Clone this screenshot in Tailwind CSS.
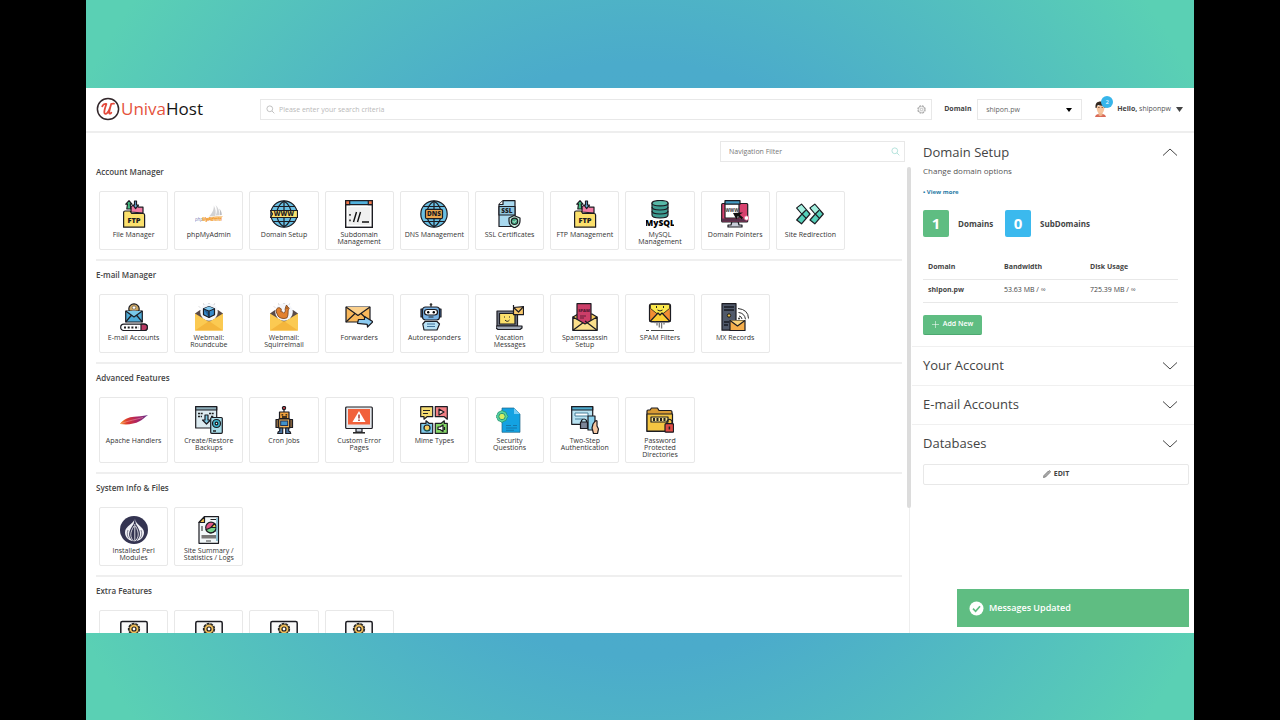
<!DOCTYPE html>
<html lang="en">
<head>
<meta charset="utf-8">
<title>UnivaHost</title>
<script src="https://cdn.jsdelivr.net/npm/@tailwindcss/browser@4"></script>
</head>
<body class="h-screen overflow-hidden bg-black px-[86px] font-['Open_Sans',sans-serif] text-[#444]">
<div class="flex h-full flex-col bg-[radial-gradient(circle_at_center,#4aaacd_0%,#4babcb_45%,#5ad0b4_94%)] pt-[88px] pb-[87px]">
<div class="relative flex min-h-0 flex-1 flex-col overflow-hidden bg-white">

  <header class="flex h-[45px] shrink-0 items-center border-b-2 border-[#eee] pr-[11px] pb-px pl-[10px]">
    <a href="#" class="flex w-[164px] shrink-0 items-center text-[17px] leading-6 text-[#151515]" aria-label="UnivaHost">
      <svg class="size-6" viewBox="0 0 24 24" fill="none"><circle cx="12" cy="12" r="10.600" stroke="#33272b" stroke-width="1.500"/><path d="M6.200 9.300C7 7.500 8.300 6.700 9.800 6.900M10.400 7C9.500 9.500 8.300 13 8.300 15.200c0 2 1.600 2.200 3.200.4 1.600-1.900 2.700-4.900 3.700-8.600M15.200 7c-1 3.600-2.200 7.200-1.900 9 .2 1.100 1.200.8 2-.3M15.200 7c1-.4 2-.5 2.800-.3" stroke="#e3493b" stroke-width="1.800" stroke-linecap="round"/></svg>
      <span class="ml-px"><span class="text-[#e5533d]">Univa</span>Host</span>
    </a>
    <label class="flex h-[21px] flex-1 items-center border border-[#e8e8e8] px-[5px]">
      <svg class="size-[9px]" viewBox="0 0 10 10" fill="none" stroke="#bbb"><circle cx="4.200" cy="4.200" r="3.200"/><path d="M6.600 6.600 9.300 9.300"/></svg>
      <input type="text" aria-label="Search" placeholder="Please enter your search criteria" class="ml-1 h-4 min-w-0 flex-1 text-[7px] outline-none placeholder:text-[#b9b9b9]">
      <svg class="size-[9px]" viewBox="0 0 10 10" fill="none" stroke="#aaa"><circle cx="5" cy="5" r="4" stroke-dasharray="2.200 .94" stroke-width="1.400"/><circle cx="5" cy="5" r="3.300" stroke-width=".6"/><circle cx="5" cy="5" r="1.400" stroke-width=".8"/></svg>
    </label>
    <label for="dom" class="ml-3 w-[33px] text-[7px] font-bold">Domain</label>
    <div class="relative h-[21px] w-[105px] border border-[#e8e8e8]">
      <select id="dom" class="block size-full appearance-none pl-2 text-[7px] leading-[19px] text-[#666]"><option>shipon.pw</option></select>
      <svg class="pointer-events-none absolute top-2 right-[9px] h-1 w-[6px]" viewBox="0 0 6 4"><path d="M0 0h6L3 4z" fill="#000"/></svg>
    </div>
    <button class="relative ml-3 flex items-center text-[7px]">
      <svg class="h-4 w-[13px]" viewBox="0 0 13 16"><path d="M1 16c.4-2.500 2.500-3 5.500-3s5 .5 5.500 3z" fill="#d96a57"/><path d="M4.500 11h4v3.200l-2 1-2-1z" fill="#efb58d"/><path d="M2.500 5c0 5 1.500 7.500 4 7.500S10.500 10 10.500 5z" fill="#f6c39c"/><path d="M1.600 7C1 2.500 3 .5 6.500.5S12 2.500 11.400 7l-1-.2V4.600c-2.500.5-5-.2-6.300-.7-.9.6-1.400 1.600-1.500 3z" fill="#33271f"/><path d="M4 6.500h1.700M7.500 6.500h1.600" stroke="#4b3023" stroke-width=".6"/></svg>
      <span class="absolute top-[-5px] left-[7px] size-3 rounded-full bg-[#37b5ea] text-center text-[6px] leading-3 text-white">2</span>
      <span class="ml-[10px]"><b>Hello,</b> <span class="text-[#555]">shiponpw</span></span>
      <svg class="ml-[5px] h-[5px] w-[7px]" viewBox="0 0 7 5"><path d="M0 0h7L3.500 5z" fill="#444"/></svg>
    </button>
  </header>

  <div class="flex min-h-0 flex-1">
    <main class="min-w-0 flex-1 overflow-hidden pt-2 pl-[10px]">
      <label class="mr-[2px] ml-auto flex h-[21px] w-[185px] items-center border border-[#e8e8e8] px-1">
        <input type="text" aria-label="Navigation filter" placeholder="Navigation Filter" class="ml-1 h-4 min-w-0 flex-1 text-[7px] outline-none placeholder:text-[#777]">
        <svg class="size-[9px]" viewBox="0 0 10 10" fill="none" stroke="#aee0d8"><circle cx="4.200" cy="4.200" r="3.200"/><path d="M6.600 6.600 9.300 9.300"/></svg>
      </label>
      <div id="sections" class="-mt-1"></div>
    </main>
    <div class="flex w-[5px] shrink-0 justify-center pt-[34px]">
      <div class="relative h-full w-px bg-[#eee]"><div class="absolute top-0 left-[-2px] h-[341px] w-1 rounded-sm bg-[#dcdcdc]"></div></div>
    </div>

    <aside class="w-[282px] shrink-0 pt-[9px]">
      <section class="border-b border-[#f0f0f0] pr-4 pb-[11px] pl-[11px]">
        <button class="flex w-full items-center justify-between text-[13px] leading-5 text-[#444]">Domain Setup
          <svg class="h-2 w-4" viewBox="0 0 16 8" fill="none" stroke="#444"><path d="M1 7.500 8 1l7 6.500"/></svg></button>
        <p class="mt-1 text-[8px] leading-[10px] text-[#555]">Change domain options</p>
        <a href="#" class="mt-[11px] block text-[6px] leading-[10px] font-bold text-[#287aa6]">• View more</a>
        <div class="mt-[13px] flex items-center text-[8px] font-bold">
          <span class="h-[27px] w-[26px] rounded-xs bg-[#5fbd82] text-center text-[15px] leading-[27px] text-white">1</span>
          <span class="ml-[9px] w-[47px]">Domains</span>
          <span class="h-[27px] w-[26px] rounded-xs bg-[#3bb9ee] text-center text-[15px] leading-[27px] text-white">0</span>
          <span class="ml-[9px]">SubDomains</span>
        </div>
        <table class="mt-[18px] w-full table-fixed text-left text-[7px]">
          <thead><tr class="h-6 border-b border-[#e8e8e8]"><th class="w-[76px] pl-[5px]">Domain</th><th class="w-[86px] pl-[5px]">Bandwidth</th><th class="pl-[5px]">Disk Usage</th></tr></thead>
          <tbody><tr class="h-[23px] border-b border-[#e8e8e8]"><th class="pl-[5px]">shipon.pw</th><td class="pl-[5px]">53.63 MB / ∞</td><td class="pl-[5px]">725.39 MB / ∞</td></tr></tbody>
        </table>
        <button class="mt-3 flex h-5 w-[59px] items-center justify-center rounded-xs border-b border-[#4da870] bg-[#5fbd82] text-[7px] font-semibold text-white"><svg class="mr-1 size-[7px]" viewBox="0 0 8 8" stroke="#fff" stroke-width=".6"><path d="M4 0v8M0 4h8"/></svg>Add New</button>
      </section>
      <button class="flex h-[39px] w-full items-center justify-between border-b border-[#f0f0f0] pr-4 pl-[11px] text-[13px]">Your Account<svg class="h-2 w-4" viewBox="0 0 16 8" fill="none" stroke="#444"><path d="M1 .5 8 7l7-6.500"/></svg></button>
      <button class="flex h-[39px] w-full items-center justify-between border-b border-[#f0f0f0] pr-4 pl-[11px] text-[13px]">E-mail Accounts<svg class="h-2 w-4" viewBox="0 0 16 8" fill="none" stroke="#444"><path d="M1 .5 8 7l7-6.500"/></svg></button>
      <button class="flex h-[39px] w-full items-center justify-between pr-4 pl-[11px] text-[13px]">Databases<svg class="h-2 w-4" viewBox="0 0 16 8" fill="none" stroke="#444"><path d="M1 .5 8 7l7-6.500"/></svg></button>
      <div class="pr-[5px] pl-[11px]"><button class="flex h-[21px] w-full items-center justify-center gap-[3px] rounded-xs border border-[#e8e8e8] text-[7px] font-bold"><svg class="size-2" viewBox="0 0 10 10"><path d="M.5 9.500 1.200 6.800 6.800 1.200 8.800 3.200 3.200 8.800z" fill="#aaa" stroke="#555" stroke-width=".7"/><path d="M7.300.7l.6-.5 1.900 1.900-.5.600z" fill="#444"/></svg>EDIT</button></div>
    </aside>
  </div>

  <div role="status" class="absolute right-[5px] bottom-[6px] flex h-[38px] w-[232px] items-center gap-[5px] bg-[#5fbd82] pl-3 text-[9px] font-semibold text-white">
    <svg class="size-[15px]" viewBox="0 0 15 15"><circle cx="7.500" cy="7.500" r="7" fill="#fff"/><path d="M4 7.700l2.600 2.600L11 5.300" fill="none" stroke="#5fbd82" stroke-width="1.700"/></svg>
    Messages Updated
  </div>
</div>
</div>

<script>
const K = 'stroke="#1c1c22" stroke-width="1.200" stroke-linejoin="round"';
const envelope = `<path d="M0 10.500 5 7h18l5 3.500V27H0z" fill="#5a4b48"/><circle cx="14" cy="9" r="8.800" fill="#f4f6fa"/><path d="M5 4.500l-1-1M9 1.800 8.500.5M14 1V0M19 1.800l.6-1.300" stroke="#aaa" stroke-width=".7"/>`;
const flap = `<path d="M0 10.500 14 19l14-8.500V27.500H0z" fill="#fbca52"/><path d="M0 27.500 14 18l14 9.500z" fill="#f4b63c"/>`;
const globe = `<circle cx="14" cy="14" r="13.200" fill="#69bfe3" ${K}/><path d="M14 1v26M3 6.500h22M3 21.500h22M14 1C4.500 7 4.500 21 14 27M14 1c9.500 6 9.500 20 0 26" fill="none" ${K}/>`;
const icons = {
ftp:`<path d="M11 12V6.500l2-1h4l1.500 1.700H23V13z" fill="#f27ba4" ${K}/><path d="M9 .7 5.800 4.200h1.700L6.800 9h4l-.6-4.800H12z" fill="#43bd81" ${K}/><path d="M14.500 1h2v4h2L15.600 8.600 13 5h1.500z" fill="#69a9d9" ${K}/><path d="M3.600 27.200V12.500q0-1.500 1.500-1.500h5l1.600 2.500H23q1.600 0 1.600 1.500v12.200z" fill="#fbe06c" ${K}/><text x="14" y="23" text-anchor="middle" font-size="7.500" font-weight="800" fill="#1c1c22">FTP</text>`,
pma:`<path d="M14 16.500C18 12 19 9 18.800 5.500c2 3.500 2.300 7 1.500 10.500zM20.800 15.500c1.700-4 1.300-7.500-.3-10.500 3 2.700 4.200 6.500 3.600 10.300z" fill="#d2d2d4"/><path d="M24.500 15.200c.6-2.600.5-4.600-.2-6.600 1.700 1.800 2.500 4 2.500 6.300z" fill="#bdbdc2"/><path d="M10 18.500c6-2 12-2.500 18-2.300-1.500 1.300-2 2.100-2.300 3.200-5-.5-10 .2-15 1.600z" fill="#f7c078"/><text x="0" y="20.500" font-size="4.500" font-style="italic" fill="#8085b8">php</text><text x="7" y="20.500" font-size="4.500" font-style="italic" font-weight="700" fill="#f19a2c">MyAdmin</text>`,
www:`${globe}<path d="M.5 10.500h27v7H.5l2-3.500z" fill="#fbe06c" ${K}/><text x="14" y="16.300" text-anchor="middle" font-size="6.500" font-weight="800" fill="#1c1c22">WWW</text>`,
sub:`<rect x=".7" y=".7" width="26.600" height="26.600" fill="#fff" stroke="#1c1c22" stroke-width="1.400"/><path d="M.7.7h26.600v4H.7z" fill="#52b1dc" ${K}/><path d="M.7.7h4v4h-4z" fill="#f2784b" ${K}/><path d="M23.300.7h4v4h-4z" fill="#f2784b" ${K}/><rect x="3" y="7" width="22" height="18" fill="#f0f0f0"/><path d="M11.500 12 8.500 22M15.500 12l-3 10M17 22h7M5 14v1.700M5 19.500v1.700" stroke="#111" stroke-width="1.400"/>`,
dns:`${globe}<rect x="5.500" y="9.300" width="17" height="9.400" rx="1.500" fill="#e9a54d" ${K}/><text x="14" y="16.400" text-anchor="middle" font-size="6.500" font-weight="800" fill="#1c1c22">DNS</text>`,
ssl:`<path d="M3 26.500V4.500L7 .7h12v25.800z" fill="#a9d9ef" ${K}/><path d="M3 4.500h4V.7" fill="#fff" ${K}/><rect x="3" y="6.500" width="16" height="8.500" fill="#8fc6e0" ${K}/><text x="11" y="13" text-anchor="middle" font-size="6.500" font-weight="800" fill="#1c1c22">SSL</text><path d="M18 15.500 24 18v3c0 3-2 5.500-5.500 6.700C15 26.500 13 24 13 21v-3z" fill="#c3e9d8" ${K}/><circle cx="18.500" cy="21.300" r="3.200" fill="#43a981" ${K}/><path d="m17 21.300 1.200 1.200 2-2.200" stroke="#fff" stroke-width=".8" fill="none"/>`,
mysql:`<path d="M6 3v12c0 4 16 4 16 0V3z" fill="#3f9d92" ${K}/><ellipse cx="14" cy="3.200" rx="8" ry="2.700" fill="#58b8a7" ${K}/><path d="M6 7c0 4 16 4 16 0M6 11c0 4 16 4 16 0" fill="none" ${K}/><text x="14" y="26" text-anchor="middle" font-size="8.500" font-weight="800" fill="#000">MySQL</text>`,
ptr:`<path d="M11 21h6l1 4h3v2H7v-2h3z" fill="#c8ccd8" ${K}/><rect x=".7" y="3.500" width="26" height="18.500" rx="1" fill="#d7416e" ${K}/><path d="M1 18.500h25.500v3H1z" fill="#59304c"/><rect x="4" y="3" width="14" height="15" fill="#fff" ${K}/><path d="M4 .7h15v3.500H4z" fill="#449cc5" ${K}/><text x="11" y="12" text-anchor="middle" font-size="4.500" font-weight="700" fill="#333">WWW</text><path d="m12 13 10-.5-3.300 2.300 3.500 3-1.700 1.400-3.500-3.500-1.600 3.800z" fill="#111"/><circle cx="25.500" cy="18" r="2.200" fill="#fff" stroke="#e58" stroke-width=".7"/>`,
redir:`<path d="m.7 8 4.800-3.800 8.500 9.800-8.500 9.800L.7 20l5.300-6z" fill="#55d0ba" ${K}/><path d="m14 8 4.800-3.800 8.500 9.800-8.500 9.800L14 20l5.300-6z" fill="#55d0ba" ${K}/><path d="m1.500 8 4-3 4.300 5-4 3.200zm13.300 0 4-3 4.300 5-4 3.200z" fill="#a5efdf"/><path d="m6 14 4.200 4.300M6 14l3.800-3.700M19.300 14l4.200 4.300M19.300 14l3.800-3.700" ${K}/>`,
mail:`<circle cx="14" cy="6" r="5.200" fill="#cfa964" ${K}/><circle cx="14" cy="4.600" r="1.700" fill="#fff" stroke="#333" stroke-width=".5"/><path d="M10.800 9c.8-3 5.600-3 6.400 0z" fill="#eee"/><path d="M5.700 8h16.600v11H5.700z" fill="#4eabd7" ${K}/><path d="m5.700 8 8.300 6 8.300-6M5.700 19l5.500-6.500M22.300 19l-5.500-6.500" fill="#78c8e9" ${K}/><rect x=".7" y="21.200" width="26.600" height="6.300" rx="3.100" fill="#fff" ${K}/><path d="M21 21.200h3.200a3.100 3.100 0 0 1 0 6.300H21z" fill="#b93a63" ${K}/><path d="M4 24.400h15" stroke="#222" stroke-width="2" stroke-dasharray="2 1.700"/>`,
cube:`${envelope}<path d="m14 3.500 5.500 2.200v6L14 14.500 8.500 11.700v-6z" fill="#358acb" ${K}/><path d="m8.500 5.700 5.500 2.200v6.600M14 7.900l5.500-2.200" fill="#256097" ${K}/><path d="m9 5.400 5-1.800 5 1.800-5 2z" fill="#82c8ef"/>${flap}`,
squirrel:`${envelope}<path d="M14 15.500c-3.500 0-6.300-1.500-6.800-4.500C5.500 8.500 6 5 8.600 4.700c2.600-.2 3.400 2.200 2.200 3.800 1.600.2 2.500.9 3 1.700 1.500-1.200 1.800-2.500 1.300-4L15.700 4l.8-2 1.300 2c1.600.7 1.900 2 .4 2.900-.2 2.900.2 5.800-1.400 8.100z" fill="#e2812e" stroke="#713c19" stroke-width=".8"/><circle cx="17" cy="5" r=".5"/>${flap}`,
fwd:`<path d="M1 4h24v15H1z" fill="#f9b85b" ${K}/><path d="m1 4 12 8.500L25 4M1 19l9-8.500M25 19l-9-8.500" fill="#fbd08c" ${K}/><path d="m12.500 20.300 1-3.800h6v-3L28 18.700 22.500 24l-.3-2.700z" fill="#8bcaf0" ${K}/>`,
auto:`<path d="M11 4V1.500" stroke="#222"/><circle cx="11" cy="1.500" r="1.300" fill="#333"/><path d="M1 6h20v8H1z" fill="#4a7fc0" ${K}/><rect x="2.500" y="4" width="17" height="13" rx="3" fill="#78b3e5" ${K}/><rect x="4.500" y="6.500" width="13" height="5.500" rx="2.700" fill="#fff" ${K}/><circle cx="8.200" cy="9.200" r="1.200"/><circle cx="13.800" cy="9.200" r="1.200"/><path d="M8.500 14h5" stroke="#222"/><path d="M5 18.500h12l2.500 2.500L17 27H4l-1.200-6z" fill="#b9e2f5" ${K}/><path d="M7 21h8M7 23.500h8" stroke="#3e729b"/>`,
vac:`<rect x="1" y="8" width="20.500" height="15" fill="#737987" ${K}/><rect x="3.500" y="10.500" width="15.500" height="10.500" fill="#fbe06c" ${K}/><path d="M8.500 13.500v1M13.500 13.500v1M9 17c1.500 1.800 3 1.800 4.500 0" fill="none" stroke="#222"/><path d="M0 23h26v2l-2 1.500H2L0 25z" fill="#9ea6b4" ${K}/><path d="m17.500 4.500 10-.8v8h-10z" fill="#f9c96d" ${K}/><path d="m17.500 4.500 5 4.500 5-5.300M17.500 2v2" fill="none" ${K}/>`,
spamset:`<path d="m2 14 5-3h14l5 3v13.300H2z" fill="#f5c95f" ${K}/><path d="M6 .7h14v18L14 22l-8-5z" fill="#cc3e69" ${K}/><path d="M9 13h6M9 15h4" stroke="#641d38"/><text x="13" y="9" text-anchor="middle" font-size="4" font-weight="800" fill="#4f1730">SPAM</text><path d="M2 14v13.300h24V14l-12 7z" fill="#fbe08b" ${K}/><path d="m2 27.300 10-7.500M26 27.300 14 18" ${K}/>`,
filter:`<rect x="3.500" y=".8" width="21" height="18" rx="2" fill="#f28e33" ${K}/><path d="M4.500 1.500h19v4L14 13 4.500 5.500z" fill="#fce84a" stroke="#222" stroke-width=".8"/><path d="m4 18.500 8-8.500 2 2 2-2 8 8.500z" fill="#fccf34" ${K}/><path d="M10.500 3v2M17.500 3v2M11.500 7q2.500 2 5 0" fill="none" stroke="#222"/><path d="M8.500 19.500h1M11 19.500v3M13.300 19.500v5M15.600 19.500v6M18 19.500v2" stroke="#777" stroke-width="1.300"/><path d="M0 27.500h3M5 27.500h23" stroke="#444"/>`,
mx:`<rect x="1" y=".7" width="14" height="26.500" fill="#50596a" ${K}/><path d="M3 4h10M3 7h10" stroke="#171a22" stroke-width="1.300"/><circle cx="8" cy="12.500" r="1.700" fill="#eec34e" stroke="#151515"/><path d="M3 19h5M3 22h4" stroke="#171a22" stroke-width="1.300"/><path d="M18 13q2.500.2 3 3M17.500 9.500q6 .5 7 6.800M17 5.500q10.300 1 10.500 10" fill="none" stroke="#333"/><circle cx="18" cy="15.500" r="1" fill="#333"/><path d="M9 17.500h15v10H9z" fill="#f5ae4b" ${K}/><path d="m9 17.500 7.500 5.500 7.500-5.500" fill="#fbd47a" ${K}/>`,
apache:`<defs><linearGradient id="feather"><stop stop-color="#f69923"/><stop offset=".25" stop-color="#dc3a2c"/><stop offset=".6" stop-color="#ae2363"/><stop offset="1" stop-color="#63358c"/></linearGradient></defs><path d="M0 18c3-4.500 9-7 14-7.200 4-.2 8-.5 14-1.800-3.500 2.500-5.300 4.800-8.500 6.300C14 18.300 7 19 0 18z" fill="url(#feather)"/><path d="M1 17.500c8-3 15-4 22-6" fill="none" stroke="#f9a8b2" stroke-width=".5"/>`,
backup:`<rect x=".7" y=".7" width="21" height="21.300" fill="#dcebf1" ${K}/><path d="M.7.7h21V4h-21z" fill="#8cadb9" ${K}/><path d="M3 7.500h5M14 7.500h5M3 10.500h4M16 10.500h3" stroke="#222" stroke-dasharray="2 .7" stroke-width="1.300"/><path d="M10 9h3v5h2.500l-4 4-4-4H10z" fill="#7bc9e5" ${K}/><rect x="15.700" y="11.500" width="11.600" height="15.800" rx="1" fill="#a7dce8" ${K}/><circle cx="21.500" cy="17.500" r="4" fill="#3db4cb" ${K}/><circle cx="21.500" cy="17.500" r="1.300" fill="#fff" ${K}/><path d="M18 25h3" stroke="#222" stroke-width="1.500"/>`,
cron:`<circle cx="14" cy="2" r="1.600" fill="#dc4a50" ${K}/><path d="M14 3.500V6" ${K}/><rect x="9.500" y="6" width="9.500" height="6.700" fill="#f2a33d" ${K}/><path d="M11.500 8.800h1.700M15.500 8.800h1.700M12 11h5" stroke="#111" stroke-width="1.300"/><path d="M6 13.500h3v8H6zm13.500 0h3v8h-3z" fill="#8b6840" ${K}/><rect x="8.700" y="13" width="11" height="9" fill="#f4b556" ${K}/><rect x="10.700" y="15" width="7" height="4.500" fill="#3f92cc" stroke="#235"/><path d="M9.700 22h3v5.500h-5q0-2 2-2.500zm6 0h3v3q2 .5 2 2.500h-5z" fill="#4d78a5" ${K}/>`,
error:`<path d="M11 22h6v4h-6z" fill="#cbd2dd" ${K}/><path d="M8 26.800h12" stroke="#222" stroke-width="1.500"/><rect x=".7" y="1" width="26.600" height="21.500" rx="1" fill="#e4e8ec" ${K}/><rect x="3" y="3" width="22" height="15.500" fill="#f1613b"/><path d="M14 5 20.500 16h-13z" fill="#fff"/><path d="M14 8.500v4M14 13.500v1.500" stroke="#9b2d25" stroke-width="1.400"/>`,
mime:`<path d="M.7.7h12v10H7l-3 2.500v-2.500H.7z" fill="#f5dc73" ${K}/><path d="M3 4.500h7M3 7.500h5" stroke="#222"/><path d="M15.300.7h12v12.500l-3-2.500h-9z" fill="#f27f83" ${K}/><path d="m19 3 5 3-5 3z" fill="#ffd4d2" ${K}/><path d="M.7 27.300h12v-10H9l-3-2.500v2.500H.7z" fill="#7cc9e8" ${K}/><circle cx="7" cy="22" r="3" fill="#f5cf62" ${K}/><path d="M4 23c2 2 4 2 6 0" fill="none" stroke="#176"/><path d="M15.300 27.300h12v-10h-3v-2.500l-3 2.500h-6z" fill="#86d868" ${K}/><path d="M18 21h2l3-2v6.500l-3-2h-2zm6.500 0v3" fill="#fff" ${K}/>`,
question:`<path d="M6 2h12l6 6v18.300H6z" fill="#13a2e2" stroke="#1f6587" stroke-width=".7"/><path d="m18 2 6 6h-6z" fill="#75cdf5"/><path d="M10 19.500h5M17 19.500h4M10 22h11M10 24.300h8" stroke="#176694" stroke-width=".7"/><path d="m6 4.500 2 1 2 .7.700 2L12 10.500l-1.300 2-.7 2-2 .7-2 1.300-2-1.300-2-.7-.7-2L0 10.500l1.300-2L2 6.500l2-1z" fill="#56d4a2" stroke="#249372" stroke-width=".8"/><circle cx="6" cy="10.500" r="3.200" fill="#d4ee61" stroke="#26967c"/>`,
twostep:`<rect x=".7" y=".7" width="21" height="17.600" fill="#b9e3f2" ${K}/><path d="M.7.7h21V4h-21z" fill="#4eaacd" ${K}/><path d="M4 7h13v3H4zM4 13h8" fill="#fff" stroke="#487e98"/><path d="M17 10h7v14h-7z" fill="#8bd1ed" ${K}/><path d="M22 18c2-3 3-4 4-3v5l1.500 3-1 4.500h-4L21 22z" fill="#f5c6a0" ${K}/><path d="M10.500 16v-1.500q2.500-3 5 0V16" fill="none" ${K}/><rect x="9.500" y="16" width="7" height="6.500" fill="#7c8698" ${K}/>`,
folder:`<path d="M1 25.500V5q0-1 1-1h2l1.500-2h6L13 4.500h11.500q1.500 0 1.500 1.500v19.500z" fill="#d89b35" ${K}/><path d="M1 8h25.500v17H1z" fill="#f4c542" ${K}/><rect x="5" y="11" width="17" height="5" fill="#f9e28a" ${K}/><path d="M7 13.500h13" stroke="#222" stroke-width="3" stroke-dasharray="2 1.500"/><path d="M21 18v-3q2.500-3.500 5 0v3" fill="none" ${K}/><rect x="19" y="17.700" width="8.500" height="8.500" rx="1" fill="#e04b45" ${K}/><path d="M23.400 20.500v3" stroke="#222" stroke-width="1.500"/>`,
perl:`<circle cx="14" cy="14" r="14" fill="#343451"/><path d="M14.500 2.500c-.3 5.500-9.500 7-9.500 14 0 5 4 8 8 8.700-6-5-4.500-10 .5-17 .5-1.500.8-3.500 1-5.700zM15.300 3c0 6 8.700 7.500 8.700 13.500 0 5-4 8-8 8.700 5.500-4.500 5-9.500.3-16.500-.8-1.500-1-3.700-1-5.700z" fill="#f1f1f6"/><path d="M14 10c-4.500 7-4 11.500-.2 15.300M15.500 10c4.200 7 3.300 12-.7 15.300M14.800 8v17M9 12.500c-3 5-1.500 9 1 11M20 12.500c3 5 1.500 9-1 11" fill="none" stroke="#fff" stroke-width=".8"/><path d="M8 14c-1.500 4-.5 6.500 1 8.500M21 14c1.500 4 .5 6.500-1 8.500" fill="none" stroke="#343451" stroke-width=".6"/>`,
stats:`<path d="M4 6.500 9.500.7h14v26.600H4z" fill="#f2f8fa" ${K}/><path d="M4 6.500h5.500V.7z" fill="#f3c250" ${K}/><path d="M15.500 3.500H21M7 10v5" stroke="#222"/><circle cx="16" cy="11.500" r="5.300" fill="#e05889" ${K}/><path d="M16 11.500 19.500 7.500q3.500 4 .3 7.800z" fill="#f2c94c" ${K}/><path d="M16 11.500h5.300q-1 5.500-6.300 5.300-3-.5-4-3z" fill="#74d38c" ${K}/><path d="M6.500 19h14.500v3.500H6.500z" fill="#777"/><path d="M11 25h5" stroke="#444"/><path d="M22 2v23" stroke="#75b4cd" stroke-width="1.500"/>`,
gear:`<rect x=".8" y="2.500" width="26.400" height="20" rx="1.500" fill="#f8f8f8" stroke="#1c1c22" stroke-width="1.500"/><circle cx="14" cy="10" r="5.200" fill="#f2c05c" stroke="#222" stroke-width="1.900" stroke-dasharray="2.700 .9"/><circle cx="14" cy="10" r="4.700" fill="#f2c05c" stroke="#222" stroke-width=".6"/><circle cx="14" cy="10" r="2" fill="#fff" ${K}/>`
};
const sections = [
 ['Account Manager',[['ftp','File Manager'],['pma','phpMyAdmin'],['www','Domain Setup'],['sub','Subdomain\nManagement'],['dns','DNS Management'],['ssl','SSL Certificates'],['ftp','FTP Management'],['mysql','MySQL\nManagement'],['ptr','Domain Pointers'],['redir','Site Redirection']]],
 ['E-mail Manager',[['mail','E-mail Accounts'],['cube','Webmail:\nRoundcube'],['squirrel','Webmail:\nSquirrelmail'],['fwd','Forwarders'],['auto','Autoresponders'],['vac','Vacation\nMessages'],['spamset','Spamassassin\nSetup'],['filter','SPAM Filters'],['mx','MX Records']]],
 ['Advanced Features',[['apache','Apache Handlers'],['backup','Create/Restore\nBackups'],['cron','Cron Jobs'],['error','Custom Error\nPages'],['mime','Mime Types'],['question','Security\nQuestions'],['twostep','Two-Step\nAuthentication'],['folder','Password\nProtected\nDirectories']]],
 ['System Info & Files',[['perl','Installed Perl\nModules'],['stats','Site Summary /\nStatistics / Logs']]],
 ['Extra Features',[['gear',''],['gear',''],['gear',''],['gear','']]]
];
document.getElementById('sections').innerHTML = sections.map(([title, items]) => `
<section class="mr-[5px] border-b-2 border-[#efefef] pt-[6px] pb-[9px]">
  <h2 class="text-[8px] leading-4 font-semibold">${title.replace('&','&amp;')}</h2>
  <div class="mt-[11px] ml-[3px] grid w-[746px] grid-cols-10 gap-[6px]">${items.map(([icon, label]) => `
    <a href="#" class="flex min-h-[59px] flex-col items-center rounded-xs border border-[#e8e8e8] pt-2 pb-[4px] text-center text-[7px] leading-[7px] text-[#333]">
      <svg class="size-7 shrink-0" viewBox="0 0 28 28">${icons[icon]}</svg><span class="mt-[3px] whitespace-pre">${label}</span></a>`).join('')}
  </div>
</section>`).join('');
</script>
</body>
</html>
